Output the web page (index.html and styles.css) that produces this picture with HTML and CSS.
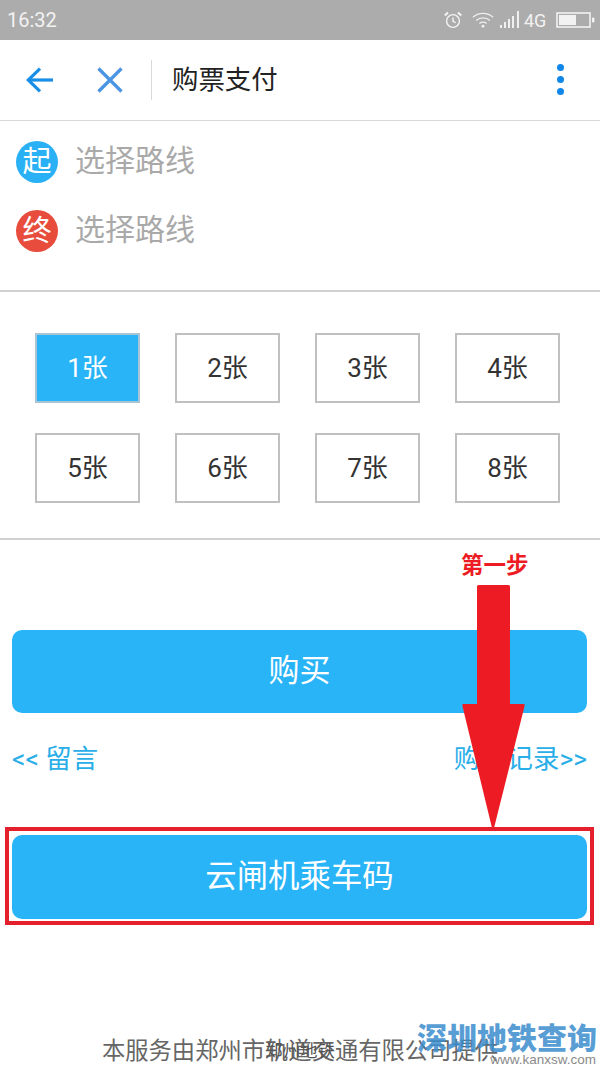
FILE: index.html
```html
<!DOCTYPE html>
<html lang="zh">
<head>
<meta charset="utf-8">
<title>购票支付</title>
<link rel="stylesheet" href="styles.css">
</head>
<body>
<div class="page">
  <div class="status">
    <span class="time">16:32</span>
    <div class="status-icons">
      <svg class="i-alarm" width="20" height="20" viewBox="0 0 20 20" fill="none" stroke="#f4f4f4" stroke-width="1.4"><circle cx="10" cy="11" r="6.4"/><path d="M10 7.5V11.3L12.6 12.6"/><path d="M1.8 5.4L5 2.4M18.2 5.4L15 2.4" stroke-width="2"/></svg>
      <svg class="i-wifi" width="22" height="18" viewBox="0 0 22 18" fill="none" stroke="#f0f0f0" stroke-width="1.3"><path d="M1 6.2C6.5 1.2 15.5 1.2 21 6.2"/><path d="M4.2 9.4C8 6 14 6 17.8 9.4"/><path d="M7.4 12.4C9.4 10.8 12.6 10.8 14.6 12.4"/><circle cx="11" cy="15.2" r="1.4" fill="#f0f0f0" stroke="none"/></svg>
      <svg class="i-signal" width="20" height="18" viewBox="0 0 20 18" fill="#f0f0f0"><rect x="0" y="14" width="2" height="3"/><rect x="4" y="11" width="2" height="6"/><rect x="8" y="8" width="2" height="9"/><rect x="12" y="5" width="2" height="12"/><rect x="17" y="0" width="2" height="17"/></svg>
      <span class="net">4G</span>
      <svg class="i-batt" width="39" height="16" viewBox="0 0 39 16"><rect x="1" y="1" width="33" height="14" fill="none" stroke="#f2f2f2" stroke-width="1.6"/><rect x="3" y="3" width="17" height="10" fill="#f2f2f2"/><rect x="36" y="5.5" width="2.4" height="5" rx="1" fill="#f2f2f2"/></svg>
    </div>
  </div>

  <header class="nav">
    <svg class="i-back" width="28" height="26" viewBox="0 0 28 26" fill="none" stroke="#1a8fe8" stroke-width="3.2"><path d="M1.8 13H27"/><path d="M14 1.6L2.2 13L14 24.4"/></svg>
    <svg class="i-close" width="26" height="26" viewBox="0 0 26 26" fill="none" stroke="#4a94e4" stroke-width="3.2"><path d="M1.5 1.5L24.5 24.5M24.5 1.5L1.5 24.5"/></svg>
    <div class="divider"></div>
    <h1 class="title">购票支付</h1>
    <div class="dots"><i></i><i></i><i></i></div>
  </header>

  <section class="route">
    <div class="stop"><span class="badge badge-start">起</span><span class="stop-text">选择路线</span></div>
    <div class="stop"><span class="badge badge-end">终</span><span class="stop-text">选择路线</span></div>
  </section>

  <section class="tickets">
    <div class="ticket ticket-on">1张</div>
    <div class="ticket">2张</div>
    <div class="ticket">3张</div>
    <div class="ticket">4张</div>
    <div class="ticket">5张</div>
    <div class="ticket">6张</div>
    <div class="ticket">7张</div>
    <div class="ticket">8张</div>
  </section>

  <section class="actions">
    <div class="btn btn-buy">购买</div>
    <div class="links"><span>&lt;&lt; 留言</span><span>购票记录&gt;&gt;</span></div>
    <div class="btn btn-code">云闸机乘车码</div>
  </section>

  <footer class="foot">
    <p class="foot-text">本服务由郑州市轨道交通有限公司提供</p>
    <p class="foot-over">郑州地铁</p>
  </footer>

  <div class="step">第一步</div>
  <svg class="arrow" width="64" height="246" viewBox="0 0 64 246"><path d="M16 1.5Q16 0 17.5 0H47.5Q49 0 49 1.5V119H62.5Q64 119 63.6 121L32.5 245L31.5 245L1.4 121Q1 119 2.5 119H16Z" fill="#ed1c24"/></svg>
  <div class="mark"></div>
  <div class="wm">
    <span class="wm-title">深圳地铁查询</span>
    <span class="wm-url">www.kanxsw.com</span>
  </div>
</div>
</body>
</html>
```

FILE: styles.css
```css
* { box-sizing: border-box; }
html, body { margin: 0; padding: 0; background: #fff; }
.page {
  position: relative;
  width: 600px;
  height: 1067px;
  overflow: hidden;
  background: #fff;
  font-family: Roboto, "Noto Sans CJK SC", sans-serif;
}
p, h1 { margin: 0; font-weight: 400; }

.status {
  height: 40px;
  background: #acacac;
  display: flex;
  align-items: center;
  justify-content: space-between;
  padding: 0 5px 0 7px;
  color: #f2f2f2;
}
.time { font-size: 20px; }
.status-icons { display: flex; align-items: center; }
.i-alarm { margin-right: 9px; }
.i-wifi { margin-right: 6px; }
.i-signal { margin-right: 4px; }
.net { font-size: 18px; margin-right: 10px; width: 22px; }

.nav {
  height: 81px;
  display: flex;
  align-items: center;
  border-bottom: 1px solid #d8d8d8;
  padding: 0 36px 1px 26px;
}
.i-close { margin-left: 43px; }
.divider { width: 1px; height: 40px; background: #d9d9d9; margin-left: 28px; }
.title { font-size: 26.4px; color: #222; margin-left: 20px; line-height: 40px; }
.dots { margin-left: auto; display: flex; flex-direction: column; gap: 5px; }
.dots i { display: block; width: 7px; height: 7px; border-radius: 50%; background: #0f87e8; }

.route {
  height: 171px;
  border-bottom: 2px solid #d0d0d0;
  padding: 20px 0 0 16px;
  display: flex;
  flex-direction: column;
  gap: 27px;
}
.stop { display: flex; align-items: center; height: 42px; }
.badge {
  width: 42px;
  height: 42px;
  border-radius: 50%;
  color: #fff;
  font-size: 29px;
  line-height: 42px;
  text-align: center;
  flex: none;
}
.badge-start { background: #29b0f5; }
.badge-end { background: #e74c3c; }
.stop-text { margin-left: 17px; font-size: 30px; color: #a9a9a9; line-height: 40px; height: 42px; }

.tickets {
  height: 248px;
  border-bottom: 2px solid #d0d0d0;
  padding: 41px 0 0 35px;
  display: grid;
  grid-template-columns: repeat(4, 105px);
  grid-auto-rows: 70px;
  column-gap: 35px;
  row-gap: 30px;
}
.ticket {
  border: 2px solid #c0c0c0;
  display: flex;
  align-items: center;
  justify-content: center;
  font-size: 26px;
  padding-bottom: 6px;
  color: #333;
}
.ticket-on { background: #29b4f8; color: #fff; border-color: #a9c4d4; }

.actions { padding: 90px 13px 0 12px; }
.btn {
  border-radius: 10px;
  background: #29b4f8;
  color: #fff;
  height: 83px;
  display: flex;
  align-items: center;
  justify-content: center;
  padding-bottom: 8px;
}
.btn-buy { font-size: 31px; }
.btn-code { font-size: 31.4px; height: 84px; margin-top: 58px; }
.links {
  display: flex;
  justify-content: space-between;
  color: #29aee8;
  font-size: 26.4px;
  line-height: 36px;
  margin-top: 28px;
  height: 36px;
}

.foot { position: relative; margin-top: 116px; text-align: center; }
.foot-text { font-size: 23.3px; line-height: 32px; color: #666; }
.foot-over { position: absolute; left: 265px; top: 5px; font-size: 17.5px; line-height: 22px; color: #555; }

.step {
  position: absolute;
  left: 461px;
  top: 551px;
  font-size: 22.5px;
  line-height: 28px;
  font-weight: 700;
  color: #ed1c24;
}
.arrow { position: absolute; left: 461px; top: 585px; }
.mark {
  position: absolute;
  left: 5px;
  top: 827px;
  width: 589px;
  height: 98px;
  border: 4px solid #e3202c;
}
.wm {
  position: absolute;
  left: 417px;
  top: 1020px;
  width: 182px;
  height: 47px;
}
.wm-title {
  position: absolute;
  left: 0;
  top: -3px;
  font-size: 30px;
  line-height: 44px;
  font-weight: 900;
  color: rgba(58, 140, 205, .85);
  white-space: nowrap;
}
.wm-url {
  position: absolute;
  right: 3px;
  top: 33px;
  font-size: 13.5px;
  line-height: 14px;
  color: #8a8a8a;
  font-family: "Liberation Sans", sans-serif;
}
```
